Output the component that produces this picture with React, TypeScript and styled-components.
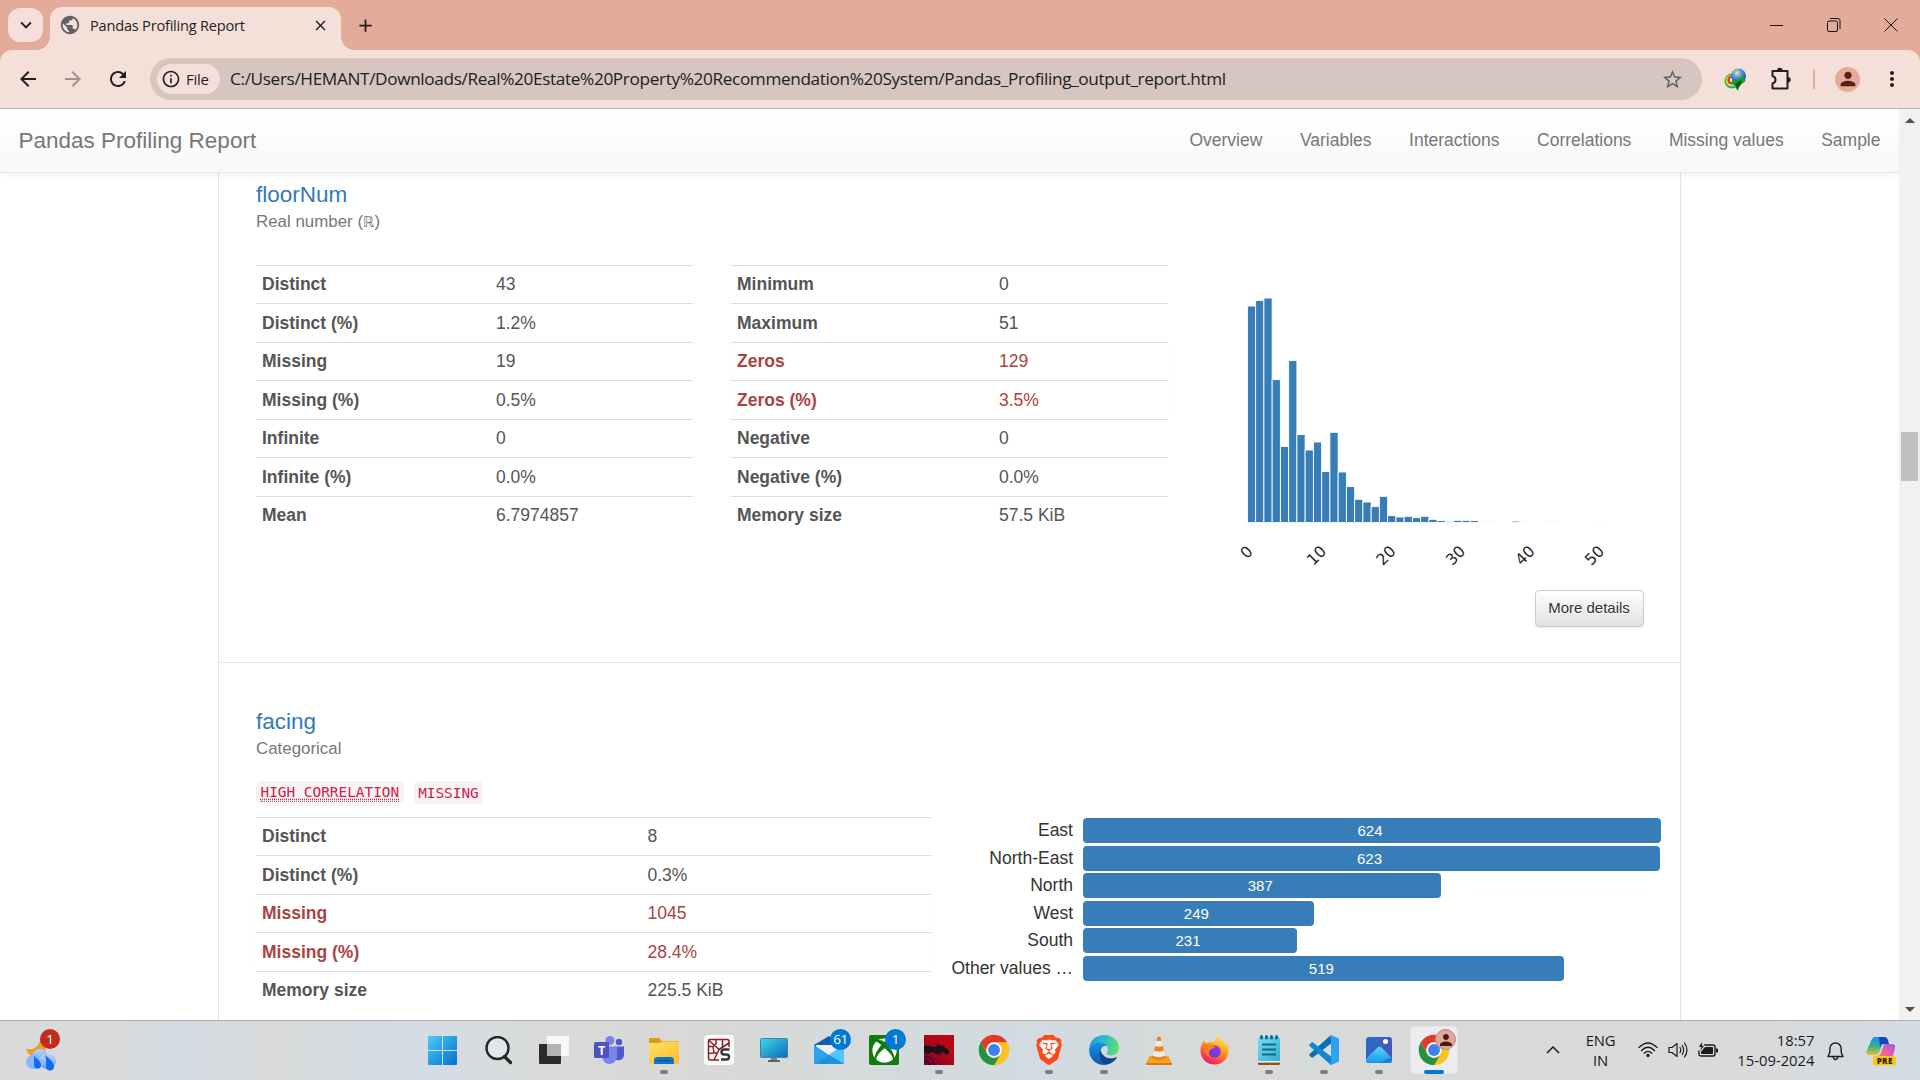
import React from 'react';
import styled, { createGlobalStyle } from 'styled-components';
import {
  MdAdd, MdArrowBack, MdArrowForward, MdClose, MdExpandMore, MdInfoOutline,
  MdMoreVert, MdPerson, MdPublic, MdRefresh, MdStarBorder,
} from 'react-icons/md';
import { FaXbox } from 'react-icons/fa';
import { SiBrave } from 'react-icons/si';

const ui = `"Open Sans", "Noto Sans", sans-serif`;
const arial = `"Liberation Sans", Arial, sans-serif`;

const GlobalStyle = createGlobalStyle`
  * { box-sizing: border-box; }
  body { margin: 0; overflow: hidden; background: #fff; }
  svg { display: block; flex: none; }
`;

const Screen = styled.div`
  width: 1920px;
  height: 1080px;
  display: flex;
  flex-direction: column;
  overflow: hidden;
  font-family: ${arial};
`;

/* ---------- browser frame ---------- */

const TabStrip = styled.header`
  height: 50px;
  flex: none;
  display: flex;
  align-items: flex-end;
  background: #e3ab99;
  color: #1f1f1f;
`;

const TabSearch = styled.div`
  width: 35px;
  height: 34px;
  margin: 0 7px 8px 8px;
  border-radius: 12px;
  background: #f5e0d9;
  display: grid;
  place-items: center;
`;

const Tab = styled.div`
  position: relative;
  width: 291px;
  height: 43px;
  padding: 0 12px 7px 9px;
  border-radius: 12px 12px 0 0;
  background: #f5e0d9;
  display: flex;
  align-items: center;
  &::before, &::after {
    content: '';
    position: absolute;
    bottom: 0;
    width: 13px;
    height: 13px;
  }
  &::before { left: -13px; background: radial-gradient(circle at 0 0, transparent 12.5px, #f5e0d9 13px); }
  &::after { right: -13px; background: radial-gradient(circle at 100% 0, transparent 12.5px, #f5e0d9 13px); }
`;

const TabTitle = styled.span`
  flex: 1;
  padding-left: 9px;
  font: 14.6px/20px ${ui};
  letter-spacing: -0.22px;
  white-space: nowrap;
`;

const NewTab = styled.div`
  padding: 0 0 14px 14px;
  flex: 1;
`;

const Caption = styled.div`
  display: flex;
  gap: 43px;
  height: 50px;
  align-items: center;
  padding: 0 22px 1px 0;
`;

const ToolbarBack = styled.div`
  background: #e3ab99;
  flex: none;
`;

const Toolbar = styled.div`
  height: 59px;
  display: flex;
  align-items: center;
  background: #f5e0d9;
  border-bottom: 1px solid #c6aca6;
  border-radius: 12px 12px 0 0;
  color: #1f1f1f;
`;

const NavButtons = styled.div`
  display: flex;
  gap: 21px;
  width: 150px;
  padding-left: 15.5px;
`;

const Omnibox = styled.div`
  width: 1552px;
  height: 42px;
  border-radius: 21px;
  background: #d7c6bf;
  display: flex;
  align-items: center;
  padding: 0 18px 0 7px;
`;

const FileChip = styled.div`
  width: 63px;
  height: 30px;
  border-radius: 15px;
  background: #f5e0d9;
  display: flex;
  align-items: center;
  gap: 5px;
  padding: 0 0 1px 4px;
  font: 15px/20px ${ui};
  letter-spacing: -0.3px;
`;

const Url = styled.span`
  flex: 1;
  padding-left: 10px;
  font: 17.2px/24px ${ui};
  letter-spacing: -0.355px;
  white-space: nowrap;
  color: #202124;
`;

const Extensions = styled.div`
  flex: 1;
  display: flex;
  align-items: center;
  padding-left: 22px;
`;

const ExtensionGap = styled.i`
  width: 23px;
`;

const Divider = styled.i`
  width: 2px;
  height: 20px;
  margin: 0 20px 0 21px;
  background: #e3ab99;
`;

const Avatar = styled.div`
  width: 25px;
  height: 25px;
  border-radius: 50%;
  background: #e3ab99;
  color: #5c1f10;
  display: grid;
  place-items: center;
  margin-right: 20px;
`;

/* ---------- report page ---------- */

const Viewport = styled.div`
  height: 911px;
  flex: none;
  display: flex;
  background: #fff;
`;

const Page = styled.main`
  width: 1899px;
  height: 911px;
  overflow: hidden;
  display: flex;
  flex-direction: column;
`;

const Navbar = styled.nav`
  position: relative;
  z-index: 1;
  height: 64px;
  flex: none;
  display: flex;
  align-items: center;
  justify-content: space-between;
  padding: 0 18.5px 1px 18.5px;
  background: linear-gradient(#fff, #f8f8f8);
  border-bottom: 1px solid #e7e7e7;
  box-shadow: 0 1px 6px rgba(0, 0, 0, 0.075);
  color: #777;
`;

const Brand = styled.span`
  font-size: 22.5px;
  line-height: 25px;
`;

const NavLinks = styled.div`
  display: flex;
  gap: 37.5px;
  font-size: 17.5px;
  line-height: 25px;
`;

const Container = styled.div`
  width: 1463px;
  margin-left: 218px;
  flex: 1;
  border: solid #e1e1e8;
  border-width: 0 1px;
`;

const Section = styled.section<{ $top: number; $height?: number }>`
  height: ${p => (p.$height ? `${p.$height}px` : 'auto')};
  padding: ${p => p.$top}px 36px 0 37px;
  & + & { border-top: 1px solid #e1e1e8; }
`;

const Title = styled.h4`
  margin: 0;
  font-size: 22.5px;
  line-height: 25px;
  font-weight: 400;
  color: #337ab7;
`;

const Kind = styled.div`
  margin-top: 3px;
  height: 24px;
  font-size: 16.9px;
  line-height: 24px;
  color: #777;
`;

const DoubleStruck = styled.span`
  font-family: "DejaVu Sans", sans-serif;
  font-size: 14.4px;
`;

const Columns = styled.div<{ $top: number }>`
  display: flex;
  align-items: flex-start;
  margin-top: ${p => p.$top}px;
`;

const Table = styled.div<{ $width: number; $gap?: number }>`
  width: ${p => p.$width}px;
  margin-right: ${p => p.$gap ?? 0}px;
  flex: none;
`;

const Row = styled.div<{ $key: number; $alert?: boolean }>`
  height: 38.5px;
  display: grid;
  grid-template-columns: ${p => p.$key}px 1fr;
  align-items: center;
  padding: 0 0 0 6px;
  border-top: 1px solid #ddd;
  font-size: 17.5px;
  line-height: 25px;
  color: ${p => (p.$alert ? '#a94442' : '#555')};
  box-shadow: ${p => (p.$alert ? '0 1px 1px rgba(0,0,0,.05)' : 'none')};
`;

const Key = styled.b`
  font-weight: 700;
`;

const ChartColumn = styled.div`
  flex: 1;
  display: flex;
  flex-direction: column;
  align-items: flex-end;
`;

const MoreButton = styled.button`
  width: 109px;
  height: 37px;
  margin: 0;
  padding: 0 1px 0 0;
  border: 1px solid #ccc;
  border-radius: 4px;
  background: linear-gradient(#fff, #e0e0e0);
  box-shadow: 0 1px 1px rgba(0, 0, 0, 0.075);
  font: 15px/22px ${arial};
  color: #333;
  text-shadow: 0 1px 0 #fff;
`;

const Tags = styled.div`
  display: flex;
  gap: 10px;
  margin-top: 20px;
`;

const Tag = styled.code`
  height: 23px;
  padding: 0 4.5px;
  border-radius: 5px;
  background: #f9f2f4;
  color: #c7254e;
  font: 14.4px/24px "DejaVu Sans Mono", monospace;
`;

const Abbr = styled.span`
  display: block;
  height: 21px;
  line-height: 22px;
  border-bottom: 1px dotted #777;
  text-decoration: underline dotted #c7254e;
  text-underline-offset: 2px;
`;

const Bars = styled.div`
  flex: 1;
  margin: 1.25px 0 0 18px;
`;

const BarRow = styled.div`
  display: flex;
  height: 27.5px;
`;

const BarLabel = styled.span`
  width: 124px;
  margin-right: 10px;
  text-align: right;
  font-size: 17.5px;
  line-height: 24px;
  color: #333;
  white-space: nowrap;
`;

const Bar = styled.div`
  height: 25px;
  padding-right: 4px;
  border-radius: 4px;
  background: #377eb8;
  color: #fff;
  font-size: 15px;
  line-height: 26px;
  text-align: center;
`;

const Scrollbar = styled.div`
  width: 21px;
  display: flex;
  flex-direction: column;
  align-items: center;
  background: #f1f1f1;
  padding: 9px 0 8px;
`;

const Thumb = styled.div`
  width: 17px;
  height: 49px;
  margin: 309px 0 auto;
  background: #c1c1c1;
`;

/* ---------- taskbar ---------- */

const Taskbar = styled.footer`
  height: 60px;
  flex: none;
  display: flex;
  align-items: center;
  border-top: 1px solid #abafb1;
  background: linear-gradient(90deg, #dadada 0, #d9dbdc 120px, #d3dbe4 180px, #d8dadb 260px, #d7dadc 320px, #d3dbe5 370px, #d5dce3 440px, #d8dbd9 540px, #d9d9d7 680px, #d6dada 840px, #d2dbe1 1040px, #d4dadb 1120px, #d9dada 1260px, #d8d9d9 1500px, #dadada 1750px, #d3dce5 1920px);
  color: #1b1b1b;
  font-family: ${ui};
`;

const Widgets = styled.div`
  position: relative;
  width: 416.5px;
  padding: 2px 0 0 26px;
`;

const Slots = styled.div`
  display: flex;
  width: 1045px;
`;

const Slot = styled.div`
  position: relative;
  width: 55px;
  height: 59px;
  padding-bottom: 1px;
  display: grid;
  place-items: center;
  &:first-child { padding-right: 3px; }
`;

const ActiveTile = styled.div`
  width: 48px;
  height: 48px;
  border-radius: 5px;
  background: #ecedee;
  border: 1px solid #e2e4e5;
  display: grid;
  place-items: center;
`;

const Indicator = styled.i<{ $active?: boolean }>`
  position: absolute;
  bottom: 6px;
  left: 50%;
  width: ${p => (p.$active ? 20 : 8)}px;
  height: 4px;
  border-radius: 2px;
  transform: translateX(-50%);
  background: ${p => (p.$active ? '#0078d4' : '#7c7e7f')};
`;

const Badge = styled.span<{ $left: number; $top: number; $color?: string; $size?: number }>`
  position: absolute;
  left: ${p => p.$left}px;
  top: ${p => p.$top}px;
  width: ${p => p.$size ?? 20}px;
  height: ${p => p.$size ?? 20}px;
  border-radius: 50%;
  background: ${p => p.$color ?? '#0078d4'};
  color: #fff;
  font: 13.5px/20px ${ui};
  text-align: center;
  letter-spacing: -0.4px;
`;

const ProfileBadge = styled(Badge)`
  background: #dfa896;
  border: 1px solid #a98c83;
  color: #4d1b10;
  display: grid;
  place-items: center;
`;

const Tray = styled.div`
  flex: 1;
  display: flex;
  align-items: center;
  padding: 0 0 1px 84px;
`;

const Language = styled.div`
  width: 50px;
  margin: 0 12px 0 16px;
  text-align: center;
  font-size: 14.8px;
  line-height: 20px;
  letter-spacing: -0.2px;
`;

const Status = styled.div`
  display: flex;
  align-items: center;
  gap: 10px;
`;

const Clock = styled.div`
  width: 97px;
  text-align: right;
  font-size: 14.8px;
  line-height: 20px;
`;

const After = styled.div`
  display: flex;
  align-items: center;
  gap: 22px;
  padding: 2px 0 0 12px;
`;

/* ---------- data ---------- */

type Entry = [string, string, boolean?];

const floorLeft: Entry[] = [
  ['Distinct', '43'], ['Distinct (%)', '1.2%'], ['Missing', '19'], ['Missing (%)', '0.5%'],
  ['Infinite', '0'], ['Infinite (%)', '0.0%'], ['Mean', '6.7974857'],
];
const floorRight: Entry[] = [
  ['Minimum', '0'], ['Maximum', '51'], ['Zeros', '129', true], ['Zeros (%)', '3.5%', true],
  ['Negative', '0'], ['Negative (%)', '0.0%'], ['Memory size', '57.5 KiB'],
];
const facing: Entry[] = [
  ['Distinct', '8'], ['Distinct (%)', '0.3%'], ['Missing', '1045', true],
  ['Missing (%)', '28.4%', true], ['Memory size', '225.5 KiB'],
];
const directions: [string, number][] = [
  ['East', 624], ['North-East', 623], ['North', 387], ['West', 249], ['South', 231], ['Other values …', 519],
];
const histogram = [
  216.6, 222.2, 224.6, 143, 76.2, 162, 88, 72.6, 80.6, 51, 90.3, 50.6, 36, 23.3, 20.6, 16, 26.3, 7, 5.6, 6.3,
  5, 6.3, 3.3, 2, 1.3, 2.3, 2.3, 2, 0.9, 0.9, 0, 0, 1.5, 0.7, 0, 0, 0.9, 0.9, 0, 0, 0, 0, 0.7,
];

const Stats = ({ rows, width, keyWidth, gap }: { rows: Entry[]; width: number; keyWidth: number; gap?: number }) => (
  <Table $width={width} $gap={gap}>
    {rows.map(([k, v, alert]) => (
      <Row key={k} $key={keyWidth} $alert={alert}>
        <Key>{k}</Key>
        <span>{v}</span>
      </Row>
    ))}
  </Table>
);

const Histogram = () => (
  <svg width="409" height="325" viewBox="1235 265 409 325">
    {histogram.map((h, i) => h > 0 && (
      <rect key={i} x={1247.4 + i * 8.25} y={522.6 - h} width="8.25" height={h} fill="#377eb8" stroke="#fff" strokeWidth="0.9" />
    ))}
    {[0, 10, 20, 30, 40, 50].map((n, i) => (
      <text
        key={n}
        transform={`translate(${(i ? 1246.7 : 1246.2) + i * 69.5} ${i ? 555.3 : 552}) rotate(-45)`}
        textAnchor="middle"
        dy="5.6"
        fontFamily="DejaVu Sans, sans-serif"
        fontSize="15.6"
        fill="#262626"
      >
        {n}
      </text>
    ))}
  </svg>
);

/* ---------- icons ---------- */

const IdmIcon = () => (
  <svg width="23" height="24" viewBox="0 0 23 24">
    <defs>
      <radialGradient id="idm" cx=".4" cy=".3" r=".7"><stop offset="0" stopColor="#e6f08a" /><stop offset=".4" stopColor="#5a9ae0" /><stop offset="1" stopColor="#1647a8" /></radialGradient>
    </defs>
    <circle cx="8" cy="14" r="7.5" fill="#34b233" />
    <circle cx="8" cy="14" r="6.3" fill="#1fb6e8" />
    <circle cx="7.5" cy="13.5" r="5.6" fill="#f5e020" />
    <circle cx="7.5" cy="13" r="4.2" fill="#e33a1c" />
    <circle cx="8" cy="13" r="2.2" fill="#fff" />
    <circle cx="14.5" cy="9" r="7.5" fill="url(#idm)" />
    <path d="M8 13l4 1 8-5 1.500 5-5 4-3 6-3-6-3-1z" fill="#16a11c" />
    <path d="M11 17l6-4 .5 3-4.500 6z" fill="#0b5f12" />
  </svg>
);

const PuzzleIcon = () => (
  <svg width="22" height="26" viewBox="0 0 22 26" fill="none" stroke="#1f1f1f" strokeWidth="2" strokeLinejoin="round">
    <path d="M2.500 5H17.500V22.500H2.500V17.500C6.500 16.500 6.500 11 2.500 10Z" />
    <path d="M7 4.500a2.800 2.800 0 0 1 5.600 0ZM18 11a2.700 2.700 0 0 1 0 5.400Z" fill="#1f1f1f" stroke="none" />
  </svg>
);

const ChromeIcon = ({ size = 30 }: { size?: number }) => {
  const d = 'M24 12.5H43.9A23 23 0 0 0 4.1 12.5L14 29.8A11.5 11.5 0 0 1 24 12.5Z';
  return (
    <svg width={size} height={size} viewBox="0 0 48 48">
      <circle cx="24" cy="24" r="22" fill="#fbc116" />
      <path d={d} fill="#fcc31e" transform="rotate(120 24 24)" />
      <path d={d} fill="#229342" transform="rotate(-120 24 24)" />
      <path d={d} fill="#df3a2d" />
      <circle cx="24" cy="24" r="11.5" fill="#fff" />
      <circle cx="24" cy="24" r="9" fill="#3f82ef" />
    </svg>
  );
};

const WeatherIcon = () => (
  <svg width="31" height="39" viewBox="0 0 31 39">
    <defs>
      <linearGradient id="cloud" x1="0" y1="0" x2="0" y2="1"><stop offset="0" stopColor="#b7d3fb" /><stop offset="1" stopColor="#6ea2f2" /></linearGradient>
    </defs>
    <path d="M14 6C14 14 8 19 0 16.500C2 24 8 27 14 25L20 18Z" fill="#f0a020" />
    <circle cx="14" cy="25" r="8" fill="url(#cloud)" />
    <rect x="0" y="23" width="17" height="14" rx="7" fill="#8db8f7" />
    <rect x="13" y="22" width="17" height="15" rx="7.5" fill="url(#cloud)" />
    <path d="M8 24C13 28 15 30 15 33a3.500 3.500 0 0 1-7 0Z" fill="#0f6bf0" />
    <path d="M19 23C25 28 28 31 28 34.500a4 4 0 0 1-8 0C20 31 21 28 19 23Z" fill="#0f6bf0" />
  </svg>
);

const StartIcon = () => (
  <svg width="29" height="29" viewBox="0 0 29 29">
    <defs><linearGradient id="win" x1="0" y1="0" x2="1" y2="1"><stop offset="0" stopColor="#4cc9fb" /><stop offset="1" stopColor="#0470cf" /></linearGradient></defs>
    <path d="M1 0H14V14H0V1Q0 0 1 0ZM15 0H28Q29 0 29 1V14H15ZM0 15H14V29H1Q0 29 0 28ZM15 15H29V28Q29 29 28 29H15Z" fill="url(#win)" />
  </svg>
);

const SearchIcon = () => (
  <svg width="28" height="29" viewBox="0 0 28 29" fill="none" stroke="#262626" strokeLinecap="round">
    <circle cx="12.5" cy="12" r="11" strokeWidth="2.4" fill="#e4e7ea" />
    <path d="M19.500 20.500L25.500 26.500" strokeWidth="3.2" />
  </svg>
);

const TaskViewIcon = () => (
  <svg width="30" height="28" viewBox="0 0 30 28">
    <rect x="0" y="8" width="22" height="20" rx="1" fill="#2b2b2b" />
    <rect x="8" y="0" width="22" height="20" rx="1" fill="#f8f8f8" />
    <path d="M8 8H22V20H9Q8 20 8 19Z" fill="#b3b3b3" />
  </svg>
);

const TeamsIcon = () => (
  <svg width="30" height="28" viewBox="0 0 30 28">
    <circle cx="16" cy="4.5" r="4.5" fill="#7b83eb" />
    <circle cx="25" cy="6" r="3.2" fill="#5059c9" />
    <path d="M20 10.500H30V19a5.500 5.500 0 0 1-9 4Z" fill="#5059c9" />
    <path d="M8 10.500H23V20a7.500 8 0 0 1-15 0Z" fill="#7b83eb" />
    <rect x="0" y="6" width="15" height="16" rx="1.5" fill="#4b53bc" />
    <text x="7.5" y="18.5" textAnchor="middle" fontSize="12.5" fontWeight="700" fontFamily="Open Sans, sans-serif" fill="#fff">T</text>
  </svg>
);

const FolderIcon = () => (
  <svg width="30" height="27" viewBox="0 0 30 27">
    <defs><linearGradient id="fold" x1="0" y1="0" x2="1" y2="1"><stop offset="0" stopColor="#ffdc6b" /><stop offset="1" stopColor="#fbc02a" /></linearGradient></defs>
    <path d="M0 2Q0 1 1 1H10L13 4H29Q30 4 30 5V10H0Z" fill="#dd9d0a" />
    <path d="M0 6H10L13 4.500H30V26Q30 27 29 27H1Q0 27 0 26Z" fill="url(#fold)" />
    <path d="M5 27V23Q5 20 8 20H22Q25 20 25 23V27Z" fill="#1273c5" />
    <path d="M9 23.500H21" stroke="#0b4c8b" strokeWidth="1.2" strokeLinecap="round" />
  </svg>
);

const SpyderIcon = () => (
  <svg width="30" height="30" viewBox="0 0 30 30">
    <rect width="30" height="30" rx="4" fill="#fbfbfb" />
    <g fill="none" stroke="#8c1d24" strokeWidth="1.5" strokeLinejoin="round">
      <path d="M6 4.500H23Q25 4.500 25 6.500V12M6 4.500Q4.500 4.500 4.500 6V23Q4.500 25 6.500 25H15" />
      <path d="M4.500 5L15 14.500L25 8M15 14.500L10 25M12 4.500V9L9 11.500H4.500M18.500 4.500V12M9 11.500L10 18L4.500 18.500M10 18H14" />
    </g>
    <path d="M25.500 14.500H20Q17.500 14.500 17.500 17T20 19.500H22.500Q25 19.500 25 22T22.500 24.500H17" fill="none" stroke="#35393c" strokeWidth="2.4" />
  </svg>
);

const MonitorIcon = () => (
  <svg width="28" height="24" viewBox="0 0 28 24">
    <defs><linearGradient id="mon" x1="0" y1="0" x2="1" y2="1"><stop offset="0" stopColor="#37dbe5" /><stop offset="1" stopColor="#1268bd" /></linearGradient></defs>
    <rect x="11" y="19" width="6" height="4" fill="#7a8289" />
    <rect x="8" y="22" width="12" height="2" rx=".5" fill="#5b636a" />
    <rect x=".5" y=".5" width="27" height="19" rx="1" fill="url(#mon)" stroke="#4c7f9b" />
  </svg>
);

const MailIcon = () => (
  <svg width="30" height="28" viewBox="0 0 30 28">
    <path d="M0 9L15 0L30 9V20H0Z" fill="#0f5cab" />
    <path d="M2 9H28V20H2Z" fill="#efefef" />
    <path d="M0 9L15 19L30 9V27Q30 28 29 28H1Q0 28 0 27Z" fill="#2aa3ea" />
    <path d="M15 19L30 9V28Z" fill="#50c6f8" />
    <path d="M15 19L30 28H1Z" fill="#1f8fe0" />
  </svg>
);

const GreenTile = styled.div`
  width: 30px;
  height: 30px;
  border-radius: 2px;
  background: #107c10;
  color: #fff;
  display: grid;
  place-items: center;
`;

const DragonIcon = () => (
  <svg width="30" height="30" viewBox="0 0 30 30">
    <defs><linearGradient id="drg" x1="0" y1="1" x2="1" y2="0"><stop offset="0" stopColor="#6d0430" /><stop offset=".5" stopColor="#ad0718" /><stop offset="1" stopColor="#c00714" /></linearGradient></defs>
    <rect width="30" height="30" fill="url(#drg)" />
    <path d="M0 11Q5 10 9 12L14 11L11 8L18 11L22 10L20 12L25 15L25 18L22 20L20 17.500L15 17.500L19 20L12 19L9 17L4 19L0 18Z" fill="#1c1118" />
    <path d="M0 22Q8 20 10 30M0 26Q4 25 6 30" stroke="#3a0820" strokeWidth="1.5" fill="none" />
  </svg>
);

const BraveWrap = styled.div`
  width: 30px;
  height: 30px;
  display: grid;
  place-items: center;
  color: #fb4a1c;
  background: radial-gradient(ellipse 9px 11px at 50% 48%, #fff 92%, transparent 100%);
`;

const EdgeIcon = () => (
  <svg width="30" height="30" viewBox="0 0 30 30">
    <defs>
      <linearGradient id="e1" x1="0" y1=".3" x2="1" y2=".5"><stop offset="0" stopColor="#1f9de0" /><stop offset=".5" stopColor="#2fbfc9" /><stop offset="1" stopColor="#5fe06a" /></linearGradient>
      <linearGradient id="e2" x1="0" y1="0" x2="0" y2="1"><stop offset="0" stopColor="#1a8fdf" /><stop offset="1" stopColor="#0c5bb0" /></linearGradient>
    </defs>
    <path d="M.3 13C1 5 7.500 0 15 0C24 0 30 6 30 12.500C30 17.500 26.500 20.500 22.500 20.500C19 20.500 17.500 19.500 17.500 18.500C17.500 17.500 19 17 19 14.500C19 11 15 8 10.500 8C5.500 8 1.500 10.500 .3 13Z" fill="url(#e1)" />
    <path d="M.2 14C1 10 5.500 7.500 10 7.500C14 7.500 16.500 9 18 11C14.500 10 11.500 13 11.500 17.500C11.500 23.500 16.500 27 22 27.500C20 29 17.500 30 15 30C6.500 30 -.5 23 .2 14Z" fill="url(#e2)" />
    <path d="M11.500 15C9 20 11 28 18 29.500C22.500 28.700 26 26 28 22.500C28 22 27.500 21.800 27 22.200C22.500 24.500 14 24 11.500 15Z" fill="#12478f" />
  </svg>
);

const VlcIcon = () => (
  <svg width="26" height="29" viewBox="0 0 26 29">
    <path d="M3.500 20H22.500L26 28Q26 29 25 29H1Q0 29 0 28Z" fill="#f9a01c" />
    <path d="M0 27H26V28Q26 29 25 29H1Q0 29 0 28Z" fill="#e0780a" />
    <path d="M11.500 1Q13 0 14.500 1L19.800 22Q13 26 6.200 22Z" fill="#f0801a" />
    <path d="M10.300 5H15.700L17 10Q13 11.500 9 10ZM7.900 14.500Q13 16.500 18.100 14.500L19.300 19.500Q13 23 6.700 19.500Z" fill="#ececec" />
  </svg>
);

const FirefoxIcon = () => (
  <svg width="29" height="29" viewBox="0 0 29 29">
    <defs>
      <linearGradient id="ff" x1=".8" y1="0" x2=".3" y2="1"><stop offset="0" stopColor="#fff04a" /><stop offset=".45" stopColor="#ff9a20" /><stop offset=".8" stopColor="#ff3b4a" /><stop offset="1" stopColor="#e31587" /></linearGradient>
      <linearGradient id="ffp" x1="1" y1="0" x2="0" y2="1"><stop offset="0" stopColor="#a238e0" /><stop offset="1" stopColor="#5a3fd0" /></linearGradient>
    </defs>
    <path d="M15 6C15 3 17 1 19.500 0C20 4 24 5 26 9C27 8.500 26.500 7 26 6C28 8.500 29 12 28.500 16C27.500 24 21.500 28.500 14.500 28.500C6.500 28.500 .5 22.500 .5 14.500C.5 10 2 7 4.500 4C4.500 6 5 7 6 7.500C8 6 10 5.500 12 5.800Z" fill="url(#ff)" />
    <circle cx="14.5" cy="15.5" r="6.3" fill="url(#ffp)" />
    <path d="M4 9C8 7 11 8 12.500 9.500C15 10 15.500 11 14.500 12C12 12.500 10 13 9.500 15C8 18 10 21 12.500 22C7 22 4 17 4 9Z" fill="#ff7b2a" />
  </svg>
);

const NotepadIcon = () => (
  <svg width="22" height="31" viewBox="0 0 22 31">
    <defs><linearGradient id="np" x1="0" y1="0" x2="1" y2="1"><stop offset="0" stopColor="#7ddcf2" /><stop offset="1" stopColor="#35aacb" /></linearGradient></defs>
    <rect x="0" y="26" width="22" height="4" rx="1" fill="#92500f" />
    <rect x="0" y="2" width="22" height="25.5" rx="1.5" fill="url(#np)" />
    <path d="M0 26H22V27.500H0Z" fill="#f2f2f2" />
    <path d="M4 9.500H18M4 14.500H18M4 19.500H18" stroke="#0b6a8d" strokeWidth="2" />
    {[3.5, 8.5, 13.5, 18.5].map(x => <rect key={x} x={x - 1.5} y="0" width="3" height="4.5" rx="1.5" fill="#0e6f92" />)}
  </svg>
);

const VscodeIcon = () => (
  <svg width="30" height="30" viewBox="0 0 30 30">
    <path d="M22 0V8.500L4 22.500Q3 23 2 22L.5 20.500Q0 19.500 .8 18.800Z" fill="#0c6fb5" />
    <path d="M22 30V21.500L4 7.500Q3 7 2 8L.5 9.500Q0 10.500 .8 11.200Z" fill="#1384ce" />
    <path d="M22 0L30 3.500V26.500L22 30L19.500 28.500Q22 28.500 22 26V4Q22 1.500 19.500 1.500Z" fill="#2aa4f0" />
  </svg>
);

const PhotosIcon = () => (
  <svg width="26" height="26" viewBox="0 0 26 26">
    <defs>
      <linearGradient id="ph" x1="0" y1="0" x2="1" y2="1"><stop offset="0" stopColor="#2072cf" /><stop offset=".5" stopColor="#3d5dbd" /><stop offset="1" stopColor="#5a48a8" /></linearGradient>
      <linearGradient id="pm" x1="0" y1="0" x2="0" y2="1"><stop offset="0" stopColor="#56d7fb" /><stop offset="1" stopColor="#1b95e8" /></linearGradient>
    </defs>
    <rect width="26" height="26" rx="3" fill="url(#ph)" />
    <path d="M0 22L11.500 10.500Q13.500 8.500 15.500 10.500L26 21V23Q26 26 23 26H3Q0 26 0 23Z" fill="url(#pm)" />
    <path d="M14 26L25 20L26 21V23Q26 26 23 26Z" fill="#1a7fdc" />
    <circle cx="19.5" cy="4.5" r="2.5" fill="#fff" />
  </svg>
);

const WifiIcon = () => (
  <svg width="20" height="16" viewBox="0 0 20 16" fill="none" stroke="#1b1b1b" strokeWidth="1.3" strokeLinecap="round">
    <path d="M1 5.500Q10-3.500 19 5.500M3.500 8.500Q10 2 16.500 8.500M6.300 11.300Q10 7.500 13.700 11.300" />
    <circle cx="10" cy="13.500" r="1.7" fill="#1b1b1b" stroke="none" />
  </svg>
);

const SpeakerIcon = () => (
  <svg width="20" height="18" viewBox="0 0 20 18" fill="none" stroke="#1b1b1b" strokeWidth="1.2" strokeLinecap="round" strokeLinejoin="round">
    <path d="M1 6.500H4L9 2.500V15.500L4 11.500H1ZM12 6.500Q13.500 9 12 11.500M14.300 4.500Q17 9 14.300 13.500M16.500 2Q21.500 9 16.500 16" />
  </svg>
);

const BatteryIcon = () => (
  <svg width="20" height="18" viewBox="0 0 20 18">
    <path d="M6 4H15Q17 4 17 6V13Q17 15 15 15H3Q1 15 1 13V9.500" fill="none" stroke="#1b1b1b" strokeWidth="1.4" />
    <path d="M7 6.500H14.500V12.500H3.500V11Z" fill="#1b1b1b" stroke="#1b1b1b" strokeLinejoin="round" />
    <path d="M18 7.500H19Q20 7.500 20 8.500V10.500Q20 11.500 19 11.500H18Z" fill="#1b1b1b" />
    <path d="M4.500 0L.5 6H3L2 10.500L6.500 4.500H4Z" fill="#1b1b1b" stroke="#d9d9d9" strokeWidth=".5" />
  </svg>
);

const BellIcon = () => (
  <svg width="17" height="19" viewBox="0 0 17 19" fill="none" stroke="#1b1b1b" strokeWidth="1.4" strokeLinejoin="round">
    <path d="M8.500 1C5 1 2.800 3.500 2.800 7V10.500L1 14.500H16L14.200 10.500V7C14.200 3.500 12 1 8.500 1ZM6.300 15Q6.500 17.500 8.500 17.500T10.700 15" />
  </svg>
);

const CopilotIcon = () => (
  <svg width="31" height="30" viewBox="0 0 31 30">
    <defs>
      <linearGradient id="c1" x1="0" y1="0" x2="0" y2="1"><stop offset="0" stopColor="#1b8fe8" /><stop offset=".5" stopColor="#30b09a" /><stop offset="1" stopColor="#f0c020" /></linearGradient>
      <linearGradient id="c2" x1="1" y1="0" x2="0" y2="1"><stop offset="0" stopColor="#9b5be8" /><stop offset=".6" stopColor="#f0609a" /><stop offset="1" stopColor="#f98050" /></linearGradient>
    </defs>
    <path d="M6 3Q7 1 9 1H19L13 17Q12 19 10 19H3Q-.5 19 .5 15Z" fill="url(#c1)" />
    <path d="M13 1H19Q21 1 22 4L23 8H17Q15 8 14 11Z" fill="#1746c4" />
    <path d="M18 8H26Q30 8 29 12L27 20H12Q14 20 15 17Z" fill="url(#c2)" />
    <rect x="7" y="20" width="23" height="9.5" rx="2.5" fill="#fdc70c" />
    <text x="18.7" y="27.8" textAnchor="middle" fontSize="8" fontWeight="800" letterSpacing=".4" fontFamily="Open Sans, sans-serif" fill="#222">PRE</text>
  </svg>
);

const taskbarApps: { icon: React.ReactNode; running?: boolean; badge?: string }[] = [
  { icon: <StartIcon /> },
  { icon: <SearchIcon /> },
  { icon: <TaskViewIcon /> },
  { icon: <TeamsIcon /> },
  { icon: <FolderIcon />, running: true },
  { icon: <SpyderIcon /> },
  { icon: <MonitorIcon /> },
  { icon: <MailIcon />, badge: '61' },
  { icon: <GreenTile><FaXbox size={25} /></GreenTile>, badge: '1' },
  { icon: <DragonIcon />, running: true },
  { icon: <ChromeIcon size={32} /> },
  { icon: <BraveWrap><SiBrave size={30} /></BraveWrap>, running: true },
  { icon: <EdgeIcon />, running: true },
  { icon: <VlcIcon /> },
  { icon: <FirefoxIcon /> },
  { icon: <NotepadIcon />, running: true },
  { icon: <VscodeIcon />, running: true },
  { icon: <PhotosIcon />, running: true },
];

export default function App() {
  return (
    <Screen>
      <GlobalStyle />
      <TabStrip>
        <TabSearch><MdExpandMore size={22} /></TabSearch>
        <Tab>
          <MdPublic size={22} color="#5f6368" />
          <TabTitle>Pandas Profiling Report</TabTitle>
          <MdClose size={17} />
        </Tab>
        <NewTab><MdAdd size={21} /></NewTab>
        <Caption>
          <svg width="14" height="14" viewBox="0 0 14 14"><path d="M0 7.500H13" stroke="#111" /></svg>
          <svg width="14" height="14" viewBox="0 0 14 14" fill="none" stroke="#111">
            <rect x=".5" y="3" width="10" height="10.5" rx="1.5" />
            <path d="M3 .5H11Q13 .5 13 2.500V11" />
          </svg>
          <svg width="14" height="14" viewBox="0 0 14 14"><path d="M.5 .5L13.500 13.500M13.500 .5L.5 13.500" stroke="#111" /></svg>
        </Caption>
      </TabStrip>
      <ToolbarBack>
        <Toolbar>
          <NavButtons>
            <MdArrowBack size={24} />
            <MdArrowForward size={24} color="#a09390" />
            <MdRefresh size={24} />
          </NavButtons>
          <Omnibox>
            <FileChip><MdInfoOutline size={20} />File</FileChip>
            <Url>C:/Users/HEMANT/Downloads/Real%20Estate%20Property%20Recommendation%20System/Pandas_Profiling_output_report.html</Url>
            <MdStarBorder size={23} color="#5f6368" />
          </Omnibox>
          <Extensions>
            <IdmIcon />
            <ExtensionGap />
            <PuzzleIcon />
            <Divider />
            <Avatar><MdPerson size={22} /></Avatar>
            <MdMoreVert size={24} />
          </Extensions>
        </Toolbar>
      </ToolbarBack>

      <Viewport>
        <Page>
          <Navbar>
            <Brand>Pandas Profiling Report</Brand>
            <NavLinks>
              {['Overview', 'Variables', 'Interactions', 'Correlations', 'Missing values', 'Sample'].map(t => <span key={t}>{t}</span>)}
            </NavLinks>
          </Navbar>
          <Container>
            <Section $top={9} $height={489}>
              <Title>floorNum</Title>
              <Kind>Real number (<DoubleStruck>ℝ</DoubleStruck>)</Kind>
              <Columns $top={30.9}>
                <Stats rows={floorLeft} width={437} keyWidth={234} gap={38} />
                <Stats rows={floorRight} width={437} keyWidth={262} />
                <ChartColumn>
                  <Histogram />
                  <MoreButton>More details</MoreButton>
                </ChartColumn>
              </Columns>
            </Section>
            <Section $top={46}>
              <Title>facing</Title>
              <Kind>Categorical</Kind>
              <Tags>
                <Tag><Abbr>HIGH CORRELATION</Abbr></Tag>
                <Tag>MISSING</Tag>
              </Tags>
              <Columns $top={12.9}>
                <Stats rows={facing} width={675} keyWidth={385.5} />
                <Bars>
                  {directions.map(([name, count]) => (
                    <BarRow key={name}>
                      <BarLabel>{name}</BarLabel>
                      <Bar style={{ width: (count / 624) * 578 }}>{count}</Bar>
                    </BarRow>
                  ))}
                </Bars>
              </Columns>
            </Section>
          </Container>
        </Page>
        <Scrollbar>
          <svg width="10" height="5" viewBox="0 0 10 5"><path d="M5 0L10 5H0Z" fill="#505050" /></svg>
          <Thumb />
          <svg width="10" height="5" viewBox="0 0 10 5"><path d="M5 5L10 0H0Z" fill="#505050" /></svg>
        </Scrollbar>
      </Viewport>

      <Taskbar>
        <Widgets>
          <WeatherIcon />
          <Badge $left={40} $top={-1} $color="#c42b1c">1</Badge>
        </Widgets>
        <Slots>
          {taskbarApps.map((a, i) => (
            <Slot key={i}>
              {a.icon}
              {a.badge && <Badge $left={28.5} $top={7.5} $size={21}>{a.badge}</Badge>}
              {a.running && <Indicator />}
            </Slot>
          ))}
          <Slot>
            <ActiveTile><ChromeIcon size={32} /></ActiveTile>
            <ProfileBadge $left={28.5} $top={8} $size={21}><MdPerson size={18} /></ProfileBadge>
            <Indicator $active />
          </Slot>
        </Slots>
        <Tray>
          <svg width="14" height="8" viewBox="0 0 14 8"><path d="M1 7L7 1L13 7" fill="none" stroke="#1b1b1b" strokeWidth="1.5" /></svg>
          <Language>ENG<br />IN</Language>
          <Status><WifiIcon /><SpeakerIcon /><BatteryIcon /></Status>
          <Clock>18:57<br />15-09-2024</Clock>
          <After><BellIcon /><CopilotIcon /></After>
        </Tray>
      </Taskbar>
    </Screen>
  );
}
